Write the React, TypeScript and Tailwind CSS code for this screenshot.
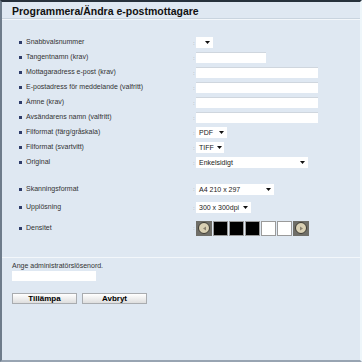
import React from "react";

const font = { fontFamily: '"Liberation Sans", Arial, sans-serif' };

function Arrow() {
  return (
    <svg width="5" height="3" viewBox="0 0 5 3" className="shrink-0">
      <path d="M0 0h5L2.5 3z" fill="#111" />
    </svg>
  );
}

function Label({ text }: { text: string }) {
  return (
    <div className="flex w-[191px] items-center pl-[17px]">
      <span className="mr-[4px] h-[3px] w-[3px] bg-[#2f3d6b]" />
      <span className="whitespace-nowrap text-[7px] text-[#333]">{text}</span>
    </div>
  );
}

function Colon() {
  return <span className="w-[2px] text-[6px] leading-none text-[#999]">:</span>;
}

function TextInput({ w }: { w: string }) {
  return <div className={`h-[11px] ${w} border-t border-[#cfd6de] bg-white`} />;
}

function Select({ value, w }: { value: string; w: string }) {
  return (
    <div className={`flex h-[11px] ${w} items-center justify-between gap-[3px] bg-white pl-[3px] pr-[3px]`}>
      <span className="whitespace-nowrap text-[7px] leading-none text-[#222]">{value}</span>
      <Arrow />
    </div>
  );
}

function Row({ label, h, children }: { label: string; h: string; children: React.ReactNode }) {
  return (
    <div className={`flex ${h} items-center`}>
      <Label text={label} />
      <Colon />
      <div className="ml-[1px] flex items-center">{children}</div>
    </div>
  );
}

function RoundBtn({ dir }: { dir: "l" | "r" }) {
  return (
    <div className="flex h-[15px] w-[16px] items-center justify-center bg-[#6f6e68]">
      <div className="flex h-[12px] w-[12px] items-center justify-center rounded-full border border-[#3c3a33] bg-[#d9d0b4]">
        <svg width="5" height="5" viewBox="0 0 5 5">
          {dir === "l" ? <path d="M4 0.5L1 2.5 4 4.5z" fill="#8a8270" /> : <path d="M1 0.5L4 2.5 1 4.5z" fill="#8a8270" />}
        </svg>
      </div>
    </div>
  );
}

function Cell({ on }: { on: boolean }) {
  return (
    <div
      className={`h-[15px] w-[15px] border border-[#9a9a9a] ${on ? "bg-black" : "bg-white"}`}
    />
  );
}

function Btn({ text }: { text: string }) {
  return (
    <button className="flex h-[11px] w-[65px] items-center justify-center border border-[#a9acb0] bg-gradient-to-b from-white to-[#dedede] text-[8px] font-bold leading-none text-black">
      {text}
    </button>
  );
}

export default function App() {
  return (
    <div
      className="relative h-[362px] w-[362px] overflow-hidden border-t-[2px] border-l-[2px] border-b-[2px] border-r-[2px] border-t-[#27313c] border-l-[#6e7c8b] border-b-[#98a4b2] border-r-[#eef6fa] bg-[#dfe8f2]"
      style={font}
    >
      {/* Header */}
      <div className="flex h-[16px] items-center pl-[10px] pt-[2px]">
        <h1 className="whitespace-nowrap text-[10.5px] font-bold leading-none text-[#111]">Programmera/Ändra e-postmottagare</h1>
      </div>
      <div className="h-px bg-[#c9d4df]" />
      <div className="h-px bg-[#f3f7fb]" />

      {/* Form */}
      <div className="mt-[15px]">
        <Row label="Snabbvalsnummer" h="h-[15px]">
          <Select value="" w="w-[17px]" />
        </Row>
        <Row label="Tangentnamn (krav)" h="h-[15px]">
          <TextInput w="w-[70px]" />
        </Row>
        <Row label="Mottagaradress e-post (krav)" h="h-[15px]">
          <TextInput w="w-[122px]" />
        </Row>
        <Row label="E-postadress för meddelande (valfritt)" h="h-[15px]">
          <TextInput w="w-[122px]" />
        </Row>
        <Row label="Ämne (krav)" h="h-[15px]">
          <TextInput w="w-[122px]" />
        </Row>
        <Row label="Avsändarens namn (valfritt)" h="h-[15px]">
          <TextInput w="w-[122px]" />
        </Row>
        <Row label="Filformat (färg/gråskala)" h="h-[15px]">
          <Select value="PDF" w="w-[31px]" />
        </Row>
        <Row label="Filformat (svartvitt)" h="h-[15px]">
          <Select value="TIFF" w="w-[28px]" />
        </Row>
        <Row label="Original" h="h-[15px]">
          <Select value="Enkelsidigt" w="w-[112px]" />
        </Row>

        <div className="h-[10px]" />

        <Row label="Skanningsformat" h="h-[18px]">
          <Select value="A4 210 x 297" w="w-[78px]" />
        </Row>
        <Row label="Upplösning" h="h-[19px]">
          <Select value="300 x 300dpi" w="w-[55px]" />
        </Row>
        <Row label="Densitet" h="h-[22px]">
          <div className="flex items-center gap-[1px]">
            <RoundBtn dir="l" />
            <Cell on />
            <Cell on />
            <Cell on />
            <Cell on={false} />
            <Cell on={false} />
            <RoundBtn dir="r" />
          </div>
        </Row>
      </div>

      <div className="mt-[18px] h-px bg-[#f3f7fb]" />

      {/* Password */}
      <div className="pl-[10px] pt-[3px]">
        <p className="text-[7px] leading-[9px] text-[#333]">Ange administratörslösenord.</p>
        <div className="mt-[1px] h-[10px] w-[84px] bg-white" />
        <div className="mt-[12px] flex gap-[5px]">
          <Btn text="Tillämpa" />
          <Btn text="Avbryt" />
        </div>
      </div>
    </div>
  );
}
